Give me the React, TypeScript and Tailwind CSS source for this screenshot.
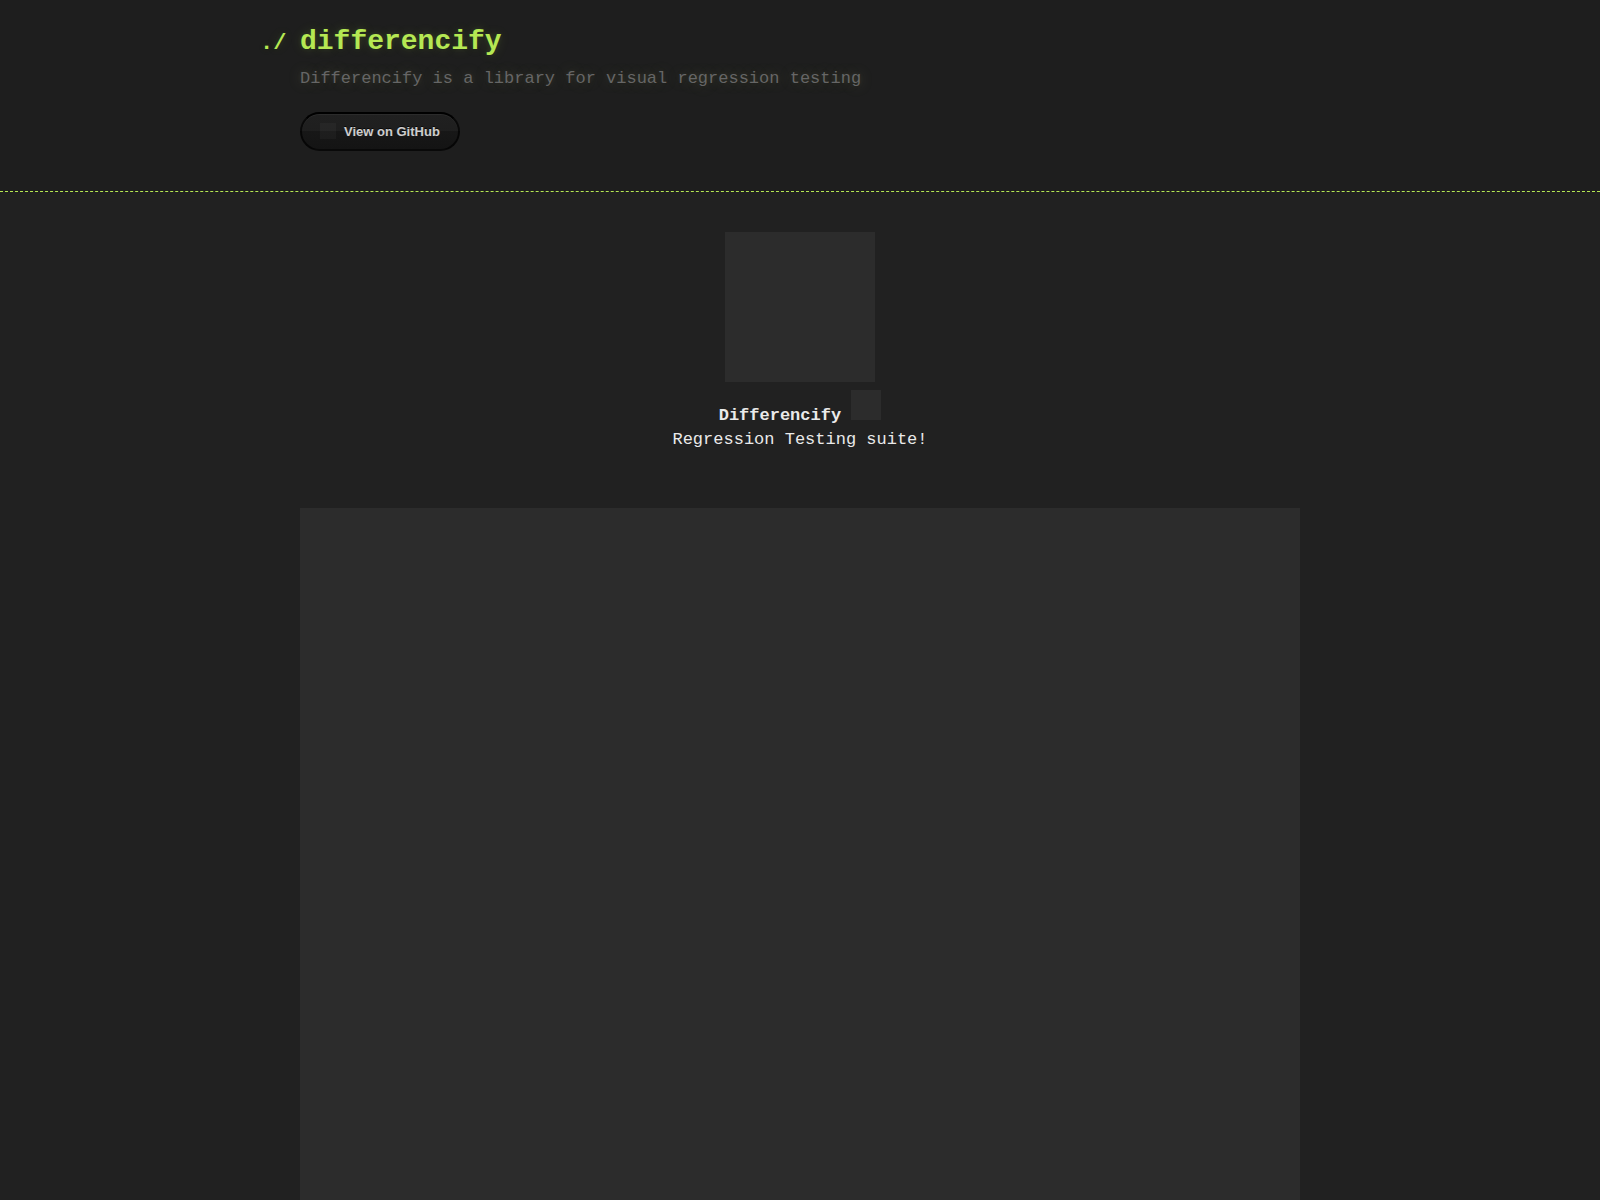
export default function App() {
  return (
    <div className="flex min-h-screen flex-col bg-[#212121] font-['Liberation_Mono',monospace] text-[17px] leading-6 text-[#eaeaea]">
      <header className="border-b border-dashed border-[#b5e853] bg-[#1e1e1e] px-5 pt-5 pb-10">
        <div className="mx-auto w-[90%] max-w-[1000px]">
          <h1 className="-ml-10 text-[28px] leading-[43px] font-bold text-[#b5e853] [text-shadow:0_1px_1px_rgba(0,0,0,0.1),0_0_5px_rgba(181,232,83,0.1),0_0_12px_rgba(181,232,83,0.15)]">
            <span className="inline-block w-10 text-[22px] whitespace-pre">./ </span>
            differencify
          </h1>
          <h2 className="mb-5 text-[17px] leading-[27px] font-light text-[#666666] [text-shadow:0_1px_1px_rgba(0,0,0,0.1),0_0_5px_rgba(200,210,140,0.1),0_0_14px_rgba(200,210,140,0.25)]">
            Differencify is a library for visual regression testing
          </h2>
          <div className="flex">
            <a
              href="#github"
              className="flex items-start gap-2 rounded-full border-2 border-black/70 border-t-black bg-[linear-gradient(to_bottom,rgba(40,40,40,0.3),rgba(35,35,35,0.3)_50%,rgba(10,10,10,0.3)_50%,rgba(0,0,0,0.3))] px-[18px] py-2 font-['Liberation_Sans',sans-serif] text-[13px] leading-[19px] font-bold text-white/80 shadow-[inset_0_1px_0_rgba(255,255,255,0.05)] [text-shadow:0_-1px_0_rgba(0,0,0,0.75)]"
            >
              <span className="mt-px size-4 bg-white/[0.03]" />
              View on GitHub
            </a>
          </div>
        </div>
      </header>
      <main className="mx-auto flex w-[90%] max-w-[1000px] flex-1 flex-col pt-10">
        <p className="mb-14 text-center">
          <span className="inline-block size-[150px] bg-[#2c2c2c] align-baseline" />
          <br />
          <strong>Differencify</strong> <span className="inline-block size-[30px] bg-[#2c2c2c] align-baseline" />
          <br />
          Regression Testing suite!
        </p>
        <div className="min-h-[600px] flex-1 bg-[#2c2c2c]" />
      </main>
    </div>
  );
}
